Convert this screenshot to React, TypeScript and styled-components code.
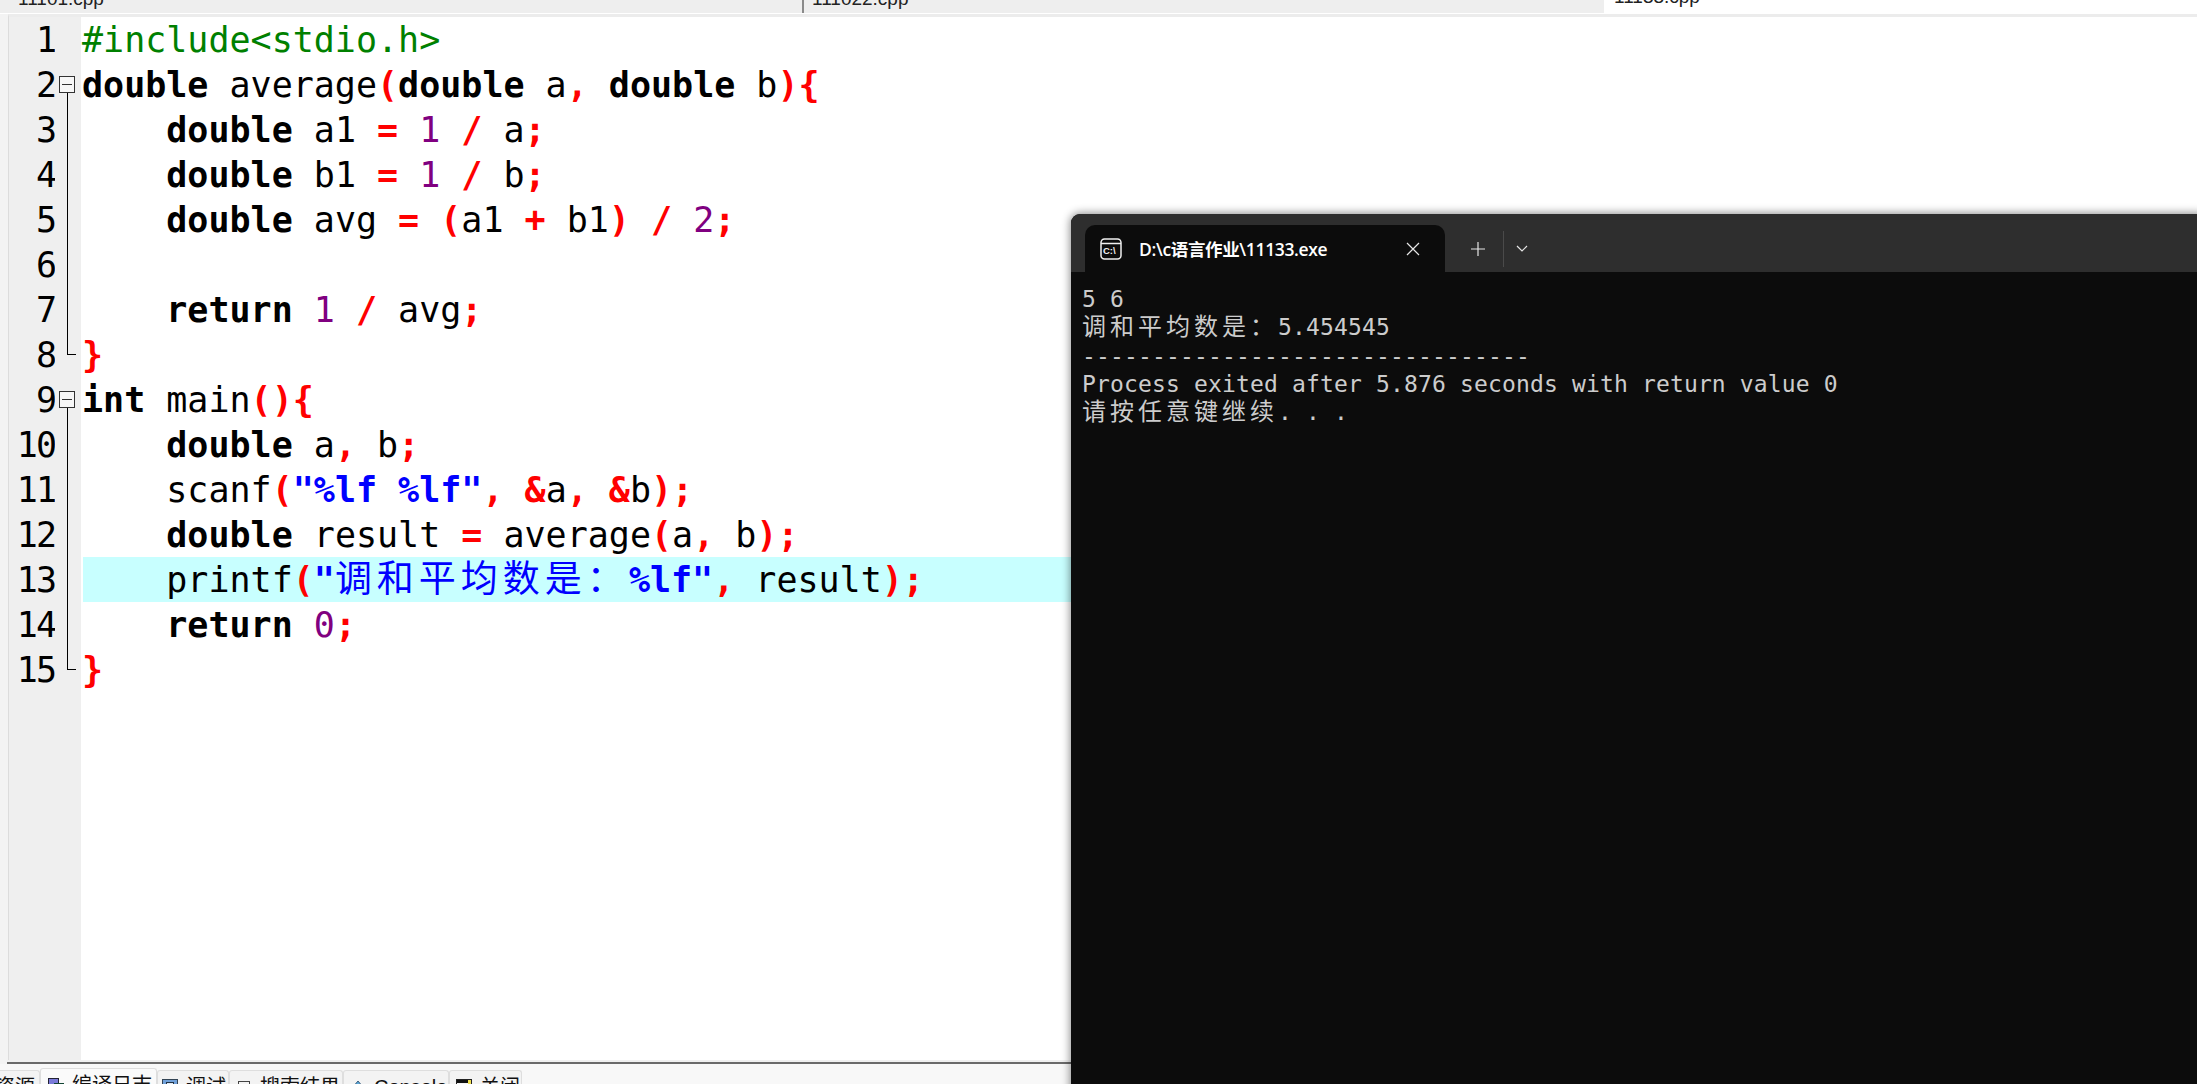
import React from "react";
import styled, { createGlobalStyle } from "styled-components";

const Global = createGlobalStyle`
  html, body { margin: 0; padding: 0; height: 1084px; overflow: hidden; background: #f3f3f3; }
  #root { height: 1084px; }
`;

const Page = styled.div`
  position: relative;
  width: 2197px;
  height: 1084px;
  overflow: hidden;
  display: flex;
  flex-direction: column;
  background: #f3f3f3;
`;

const FileTabs = styled.div`
  height: 14px;
  flex: none;
  box-sizing: border-box;
  display: flex;
  padding-left: 10px;
  background: #eeeeee;
  border-bottom: 1px solid #fff;
`;

const FileTab = styled.div<{ $w: number; $sep?: string; $active?: boolean }>`
  width: ${(p) => p.$w}px;
  flex: none;
  height: ${(p) => (p.$active ? 14 : 13)}px;
  box-sizing: border-box;
  overflow: hidden;
  background: ${(p) => (p.$active ? "#fff" : "#eeeeee")};
  border-right: ${(p) => (p.$sep ? `2px solid ${p.$sep}` : "0")};
  font: 19px/20px "Liberation Sans", sans-serif;
  color: #222;
  padding-left: 8px;
`;

const FileName = styled.span<{ $lift: number }>`
  display: block;
  margin-top: -${(p) => p.$lift}px;
`;

const EditorFrame = styled.div`
  flex: 1;
  min-height: 0;
  display: flex;
  flex-direction: column;
  margin-left: 8px;
  background: #fff;
  border-top: 3px solid #ececec;
  border-left: 1px solid #dcdcdc;
`;

const Row = styled.div`
  height: 45px;
  flex: none;
  display: flex;
  background: #fff;
`;

const LineNo = styled.div`
  width: 46px;
  flex: none;
  background: #efefef;
  text-align: right;
  font: 400 35px/46px "DejaVu Sans Mono", monospace;
  letter-spacing: -2px;
  color: #000;
`;

const FoldCell = styled.div`
  position: relative;
  width: 26px;
  flex: none;
  background: #efefef;
  margin-right: 2px;
`;

const FoldBox = styled.span`
  position: absolute;
  left: 4px;
  top: 14px;
  width: 14px;
  height: 15px;
  border: 1px solid #333;
  background: #f7f7f7;
  &::before {
    content: "";
    position: absolute;
    left: 2px;
    right: 2px;
    top: 7px;
    height: 1px;
    background: #333;
  }
  &::after {
    content: "";
    position: absolute;
    left: 7px;
    top: 16px;
    width: 1px;
    height: 14px;
    background: #000;
  }
`;

const FoldLine = styled.span`
  position: absolute;
  left: 12px;
  top: 0;
  bottom: 0;
  width: 1px;
  background: #000;
`;

const FoldEnd = styled.span`
  position: absolute;
  left: 12px;
  top: 0;
  width: 8px;
  height: 22px;
  border-left: 1px solid #000;
  border-bottom: 1px solid #000;
`;

const Code = styled.div<{ $active?: boolean }>`
  flex: 1;
  min-width: 0;
  text-indent: -1px;
  background: ${(p) => (p.$active ? "#c8ffff" : "transparent")};
  font: 400 35px/46px "DejaVu Sans Mono", monospace;
  white-space: pre;
  color: #000;
`;

const Kw = styled.b`
  font-weight: 700;
  color: #000;
`;
const Op = styled.b`
  font-weight: 700;
  color: #f00;
`;
const Num = styled.span`
  color: #800080;
`;
const Pre = styled.span`
  color: #008000;
`;
const Str = styled.b`
  font-weight: 700;
  color: #0000ff;
`;
const StrCjk = styled.span`
  font: 400 37px/0 "Noto Sans CJK SC", sans-serif;
  color: #0000ff;
  letter-spacing: 5px;
`;

const GutterFill = styled.div`
  flex: 1;
  display: flex;
  min-height: 0;
  &::before {
    content: "";
    width: 72px;
    background: #efefef;
  }
`;

const Divider = styled.div`
  flex: none;
  height: 4px;
  margin-left: 7px;
  background: #f0f0f0;
  border-bottom: 2px solid #6a6a6a;
  box-sizing: border-box;
`;

const BottomTabs = styled.div`
  flex: none;
  height: 20px;
  display: flex;
  align-items: flex-end;
  background: #f8f8f8;
  overflow: hidden;
  margin-left: -8px;
`;

const BottomTab = styled.div<{ $w: number; $pad?: number; $active?: boolean }>`
  width: ${(p) => p.$w}px;
  height: ${(p) => (p.$active ? 16 : 14)}px;
  flex: none;
  box-sizing: border-box;
  overflow: hidden;
  display: flex;
  gap: 8px;
  align-items: flex-start;
  padding: 5px 0 0 ${(p) => p.$pad ?? 6}px;
  background: ${(p) => (p.$active ? "#fafafa" : "#f3f3f3")};
  border: 1px solid #dedede;
  border-bottom: 0;
  border-radius: 3px 3px 0 0;
  font: 20px/22px "Liberation Sans", "Noto Sans CJK SC", sans-serif;
  color: #111;
  white-space: nowrap;
`;

const TabIcon = styled.svg<{ $active?: boolean }>`
  flex: none;
  margin-top: ${(p) => (p.$active ? 4 : 3)}px;
`;

const Terminal = styled.div`
  position: absolute;
  left: 1071px;
  top: 214px;
  right: -10px;
  bottom: -10px;
  background: #0c0c0c;
  border-radius: 9px 9px 0 0;
  box-shadow: 0 0 8px 1px rgba(0, 0, 0, 0.45);
  display: flex;
  flex-direction: column;
`;

const TitleBar = styled.div`
  height: 58px;
  flex: none;
  box-sizing: border-box;
  padding: 11px 0 0 14px;
  display: flex;
  align-items: flex-start;
  background: #2e2e2e;
  border-radius: 9px 9px 0 0;
`;

const TermTab = styled.div`
  width: 360px;
  height: 47px;
  flex: none;
  box-sizing: border-box;
  padding: 0 25px 0 15px;
  display: flex;
  align-items: center;
  background: #0c0c0c;
  border-radius: 10px 10px 0 0;
  color: #fff;
  font: 600 17.5px "Open Sans", "Noto Sans CJK SC", sans-serif;
`;

const TermTitle = styled.span`
  flex: 1;
  margin-left: 17px;
  white-space: nowrap;
  letter-spacing: -0.35px;
`;

const IconBtn = styled.div`
  display: flex;
  align-items: center;
  justify-content: center;
  flex: none;
`;

const TitleButtons = styled.div`
  height: 47px;
  display: flex;
  align-items: center;
  margin-left: 25px;
`;

const VSep = styled.div`
  width: 1px;
  height: 36px;
  margin: 0 12px 0 17px;
  background: #4a4a4a;
`;

const Console = styled.div`
  padding: 13px 0 0 11px;
  color: #cccccc;
  font: 400 23px/28.25px "DejaVu Sans Mono", monospace;
  letter-spacing: 0.15px;
  white-space: pre;
`;

const ConsoleLine = styled.div`
  height: 28.25px;
`;

const ConsoleCjk = styled.span`
  font: 400 24px/0 "Noto Sans CJK SC", sans-serif;
  letter-spacing: 4px;
`;

type FoldKind = "box" | "line" | "end" | "none";

const lines: { fold: FoldKind; active?: boolean; code: React.ReactNode }[] = [
  { fold: "none", code: <Pre>#include&lt;stdio.h&gt;</Pre> },
  { fold: "box", code: <><Kw>double</Kw> average<Op>(</Op><Kw>double</Kw> a<Op>,</Op> <Kw>double</Kw> b<Op>)</Op><Op>{"{"}</Op></> },
  { fold: "line", code: <>    <Kw>double</Kw> a1 <Op>=</Op> <Num>1</Num> <Op>/</Op> a<Op>;</Op></> },
  { fold: "line", code: <>    <Kw>double</Kw> b1 <Op>=</Op> <Num>1</Num> <Op>/</Op> b<Op>;</Op></> },
  { fold: "line", code: <>    <Kw>double</Kw> avg <Op>=</Op> <Op>(</Op>a1 <Op>+</Op> b1<Op>)</Op> <Op>/</Op> <Num>2</Num><Op>;</Op></> },
  { fold: "line", code: null },
  { fold: "line", code: <>    <Kw>return</Kw> <Num>1</Num> <Op>/</Op> avg<Op>;</Op></> },
  { fold: "end", code: <Op>{"}"}</Op> },
  { fold: "box", code: <><Kw>int</Kw> main<Op>()</Op><Op>{"{"}</Op></> },
  { fold: "line", code: <>    <Kw>double</Kw> a<Op>,</Op> b<Op>;</Op></> },
  { fold: "line", code: <>    scanf<Op>(</Op><Str>"%lf %lf"</Str><Op>,</Op> <Op>&amp;</Op>a<Op>,</Op> <Op>&amp;</Op>b<Op>);</Op></> },
  { fold: "line", code: <>    <Kw>double</Kw> result <Op>=</Op> average<Op>(</Op>a<Op>,</Op> b<Op>);</Op></> },
  { fold: "line", active: true, code: <>    printf<Op>(</Op><Str>"</Str><StrCjk>调和平均数是：</StrCjk><Str>%lf"</Str><Op>,</Op> result<Op>);</Op></> },
  { fold: "line", code: <>    <Kw>return</Kw> <Num>0</Num><Op>;</Op></> },
  { fold: "end", code: <Op>{"}"}</Op> },
];

const FoldMark = ({ kind }: { kind: FoldKind }) => (
  <FoldCell>
    {kind === "box" && <FoldBox />}
    {kind === "line" && <FoldLine />}
    {kind === "end" && <FoldEnd />}
  </FoldCell>
);

const CmdIcon = () => (
  <svg width="22" height="22" viewBox="0 0 22 22" fill="none" stroke="#f0f0f0" strokeWidth="1.5">
    <rect x="1" y="1" width="20" height="20" rx="3.5" />
    <path d="M1 5.5h20" />
    <text x="3" y="16" fill="#f0f0f0" stroke="none" fontSize="9.5" fontWeight="700" fontFamily="Liberation Sans, sans-serif">C:\</text>
  </svg>
);

const CompileIcon = () => (
  <TabIcon $active width="16" height="16" viewBox="0 0 16 16">
    <rect x="0.5" y="0.5" width="10" height="15" fill="#7a7ad8" stroke="#223" />
    <rect x="6.5" y="5.5" width="9" height="9" fill="#40b050" stroke="#143" />
  </TabIcon>
);
const DebugIcon = () => (
  <TabIcon width="16" height="16" viewBox="0 0 16 16">
    <rect x="0.5" y="0.5" width="15" height="15" fill="#6f9fd8" stroke="#345" />
    <rect x="4.5" y="3.5" width="7" height="7" fill="#dfe9f5" stroke="#234" />
  </TabIcon>
);
const SearchIcon = () => (
  <TabIcon width="16" height="16" viewBox="0 0 16 16">
    <rect x="2.5" y="2.5" width="11" height="11" fill="#f4f4f4" stroke="#444" />
    <rect x="5" y="5" width="6" height="2" fill="#777" />
  </TabIcon>
);
const ConsoleIcon = () => (
  <TabIcon width="16" height="16" viewBox="0 0 16 16">
    <path d="M8 2L14 9H2Z" fill="#5aa8d8" stroke="#246" strokeWidth="0.8" />
    <rect x="3" y="9" width="10" height="6" fill="#5aa8d8" />
  </TabIcon>
);
const CloseIcon = () => (
  <TabIcon width="16" height="16" viewBox="0 0 16 16">
    <rect x="0.5" y="0.5" width="15" height="15" fill="#f4f4f4" stroke="#222" />
    <rect x="1" y="1" width="14" height="3" fill="#111" />
    <rect x="12" y="1" width="3" height="14" fill="#f0e050" />
  </TabIcon>
);

export default function App() {
  return (
    <Page>
      <Global />
      <FileTabs>
        <FileTab $w={794} $sep="#8a8a8a"><FileName $lift={11}>11101.cpp</FileName></FileTab>
        <FileTab $w={802} $sep="#ffffff"><FileName $lift={11}>111022.cpp</FileName></FileTab>
        <FileTab $w={591} $active><FileName $lift={13}>11133.cpp</FileName></FileTab>
      </FileTabs>
      <EditorFrame>
        {lines.map((l, i) => (
          <Row key={i}>
            <LineNo>{i + 1}</LineNo>
            <FoldMark kind={l.fold} />
            <Code $active={l.active}>{l.code}</Code>
          </Row>
        ))}
        <GutterFill />
      </EditorFrame>
      <Divider />
      <BottomTabs>
        <BottomTab $w={48} $pad={2}>资源</BottomTab>
        <BottomTab $w={117} $pad={7} $active><CompileIcon />编译日志</BottomTab>
        <BottomTab $w={72} $pad={4}><DebugIcon />调试</BottomTab>
        <BottomTab $w={114}><SearchIcon />搜索结果</BottomTab>
        <BottomTab $w={106}><ConsoleIcon />Console</BottomTab>
        <BottomTab $w={73}><CloseIcon />关闭</BottomTab>
      </BottomTabs>
      <Terminal>
        <TitleBar>
          <TermTab>
            <CmdIcon />
            <TermTitle>D:\c语言作业\11133.exe</TermTitle>
            <IconBtn>
              <svg width="14" height="14" viewBox="0 0 14 14" stroke="#e6e6e6" strokeWidth="1.2">
                <path d="M1 1l12 12M13 1L1 13" />
              </svg>
            </IconBtn>
          </TermTab>
          <TitleButtons>
            <IconBtn>
              <svg width="16" height="16" viewBox="0 0 16 16" stroke="#e6e6e6" strokeWidth="1.2">
                <path d="M8 1v14M1 8h14" />
              </svg>
            </IconBtn>
            <VSep />
            <IconBtn>
              <svg width="12" height="8" viewBox="0 0 12 8" fill="none" stroke="#e6e6e6" strokeWidth="1.2">
                <path d="M1 1l5 5 5-5" />
              </svg>
            </IconBtn>
          </TitleButtons>
        </TitleBar>
        <Console>
          <ConsoleLine>5 6</ConsoleLine>
          <ConsoleLine><ConsoleCjk>调和平均数是：</ConsoleCjk>5.454545</ConsoleLine>
          <ConsoleLine>--------------------------------</ConsoleLine>
          <ConsoleLine>Process exited after 5.876 seconds with return value 0</ConsoleLine>
          <ConsoleLine><ConsoleCjk>请按任意键继续</ConsoleCjk>. . .</ConsoleLine>
        </Console>
      </Terminal>
    </Page>
  );
}
